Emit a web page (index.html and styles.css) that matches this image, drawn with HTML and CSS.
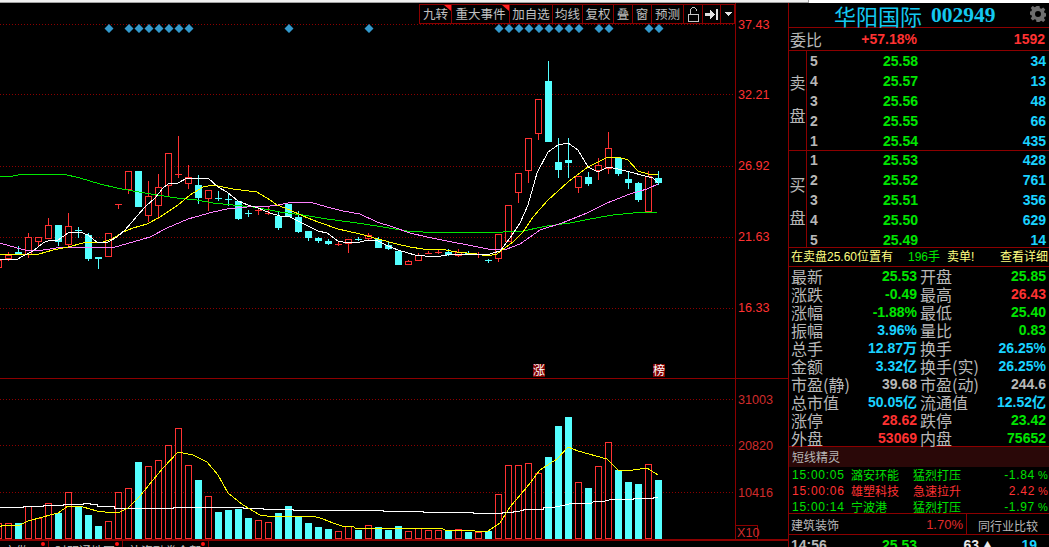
FILE: index.html
```html
<!DOCTYPE html>
<html lang="zh-CN">
<head>
<meta charset="utf-8">
<title>华阳国际 002949</title>
<link rel="stylesheet" href="styles.css">
</head>
<body>
<div class="app">
  <div class="strip"><div class="strip-track"></div></div>
  <div class="main">
    <section class="chart">
      <div class="pane pane-price">
        <svg class="plot" width="788" height="375" viewBox="0 3 788 375">
          <path class="grid" d="M0 24.5H735M0 94.5H735M0 166.5H735M0 237.5H735M0 308.5H735"/>
          <path class="axis" d="M735.5 3V378"/>
          <text class="tick" x="738" y="29">37.43</text>
          <text class="tick" x="738" y="99">32.21</text>
          <text class="tick" x="738" y="170">26.92</text>
          <text class="tick" x="738" y="241">21.63</text>
          <text class="tick" x="738" y="312">16.33</text>
          <path class="diamond" d="M109 24l4.500 4.500-4.500 4.500-4.500-4.500zM129 24l4.500 4.500-4.500 4.500-4.500-4.500zM139 24l4.500 4.500-4.500 4.500-4.500-4.500zM149 24l4.500 4.500-4.500 4.500-4.500-4.500zM159 24l4.500 4.500-4.500 4.500-4.500-4.500zM169 24l4.500 4.500-4.500 4.500-4.500-4.500zM179 24l4.500 4.500-4.500 4.500-4.500-4.500zM189 24l4.500 4.500-4.500 4.500-4.500-4.500zM289 24l4.500 4.500-4.500 4.500-4.500-4.500zM369 24l4.500 4.500-4.500 4.500-4.500-4.500zM499 24l4.500 4.500-4.500 4.500-4.500-4.500zM509 24l4.500 4.500-4.500 4.500-4.500-4.500zM519 24l4.500 4.500-4.500 4.500-4.500-4.500zM529 24l4.500 4.500-4.500 4.500-4.500-4.500zM539 24l4.500 4.500-4.500 4.500-4.500-4.500zM549 24l4.500 4.500-4.500 4.500-4.500-4.500zM559 24l4.500 4.500-4.500 4.500-4.500-4.500zM569 24l4.500 4.500-4.500 4.500-4.500-4.500zM579 24l4.500 4.500-4.500 4.500-4.500-4.500zM599 24l4.500 4.500-4.500 4.500-4.500-4.500zM609 24l4.500 4.500-4.500 4.500-4.500-4.500zM649 24l4.500 4.500-4.500 4.500-4.500-4.500zM659 24l4.500 4.500-4.500 4.500-4.500-4.500z"/>
          <path class="up-body" d="M-4.5 260.5h6v7h-6zM5.5 255.5h6v3h-6zM25.5 237.5h6v17h-6zM35.5 237.5h6v4h-6zM45.5 225.5h6v13h-6zM65.5 226.5h6v18h-6zM105.5 233.5h6v23h-6zM125.5 171.5h6v18h-6zM145.5 196.5h6v19h-6zM155.5 187.5h6v18h-6zM165.5 153.5h6v32h-6zM185.5 177.5h6v6h-6zM205.5 190.5h6v8h-6zM345.5 239.5h6v4h-6zM365.5 235.5h6v3h-6zM405.5 261.5h6v3h-6zM415.5 255.5h6v5h-6zM455.5 252.5h6v3h-6zM495.5 234.5h6v24h-6zM505.5 205.5h6v36h-6zM515.5 173.5h6v19h-6zM525.5 138.5h6v32h-6zM535.5 99.5h6v34h-6zM575.5 176.5h6v11h-6zM595.5 165.5h6v5h-6zM605.5 148.5h6v20h-6zM645.5 176.5h6v35h-6z"/>
          <path class="up-wick" d="M8.5 252V255M8.5 259V261M28.5 233V237M28.5 255V258M38.5 242V247M48.5 218V225M68.5 213V226M68.5 245V247M118.5 204V209M115 204.5h7M128.5 190V194M148.5 181V196M148.5 216V222M158.5 174V187M158.5 206V219M168.5 186V196M178.5 136V178M175 174.5h7M188.5 165V177M188.5 184V189M208.5 199V211M258.5 208V215M255 210.5h7M268.5 207V215M265 213.5h7M338.5 242V246M335 244.5h7M348.5 244V253M368.5 233V235M368.5 239V240M408.5 260V261M418.5 253V255M428.5 251V254M425 253.5h7M438.5 249V254M435 252.5h7M458.5 249V252M458.5 256V257M478.5 252V258M475 254.5h7M498.5 259V262M518.5 193V203M528.5 171V183M538.5 134V140M578.5 188V193M598.5 158V165M598.5 171V180M608.5 132V148M608.5 169V174M648.5 171V176"/>
          <path class="down-wick" d="M18.5 246V252M58.5 242V246M78.5 227V238M75 230.5h7M88.5 233V261M98.5 259V269M198.5 175V204M218.5 191V201M215 198.5h7M228.5 194V206M225 199.5h7M238.5 219V220M248.5 210V217M245 213.5h7M278.5 212V230M298.5 211V233M308.5 238V241M318.5 237V243M328.5 239V245M358.5 237V241M355 239.5h7M378.5 237V239M388.5 242V250M448.5 249V256M468.5 251V255M465 253.5h7M488.5 259V263M485 260.5h7M548.5 61V81M558.5 138V178M568.5 138V178M588.5 172V186M618.5 174V176M628.5 172V189M638.5 182V202M658.5 171V185"/>
          <path class="down-body" d="M15 252h7v3h-7zM55 225h7v17h-7zM85 235h7v24h-7zM95 257h7v2h-7zM135 171h7v36h-7zM195 185h7v13h-7zM235 201h7v18h-7zM275 216h7v12h-7zM285 204h7v13h-7zM295 217h7v15h-7zM305 231h7v7h-7zM315 238h7v3h-7zM325 241h7v3h-7zM375 239h7v9h-7zM385 245h7v4h-7zM395 251h7v14h-7zM445 252h7v3h-7zM545 81h7v61h-7zM555 162h7v8h-7zM565 160h7v3h-7zM585 177h7v7h-7zM615 158h7v16h-7zM625 179h7v4h-7zM635 183h7v17h-7zM655 178h7v5h-7z"/>
          <polyline class="ma-green" points="0,177 13,176 23,174 63,174 80,178 100,184 117,188 133,191 157,195 177,198 197,200 213,203 233,205 253,207 270,210 280,212 303,215 327,219 357,223 383,227 407,231 423,232 473,232 493,232 503,232 523,231 547,226 570,223 590,219 613,215 633,213 657,212"/>
          <polyline class="ma-magenta" points="0,243 17,248 25,250 43,250 63,247 93,247 103,248 115,247 133,242 150,237 167,228 188,219 213,212 227,209 237,208 257,206 270,206 278,205 293,202 310,202 327,207 343,211 360,214 377,222 393,227 410,233 427,237 447,241 473,246 493,250 507,249 520,244 540,230 562,223 587,213 607,203 630,194 647,189 658,184"/>
          <polyline class="ma-yellow" points="0,254 39,254 53,250 68,247 83,243 103,242 112,239 123,232 133,228 147,224 160,217 178,205 190,195 203,187 213,185 233,189 257,192 270,200 277,205 290,210 303,216 318,222 338,229 360,234 378,239 397,244 410,247 423,249 440,249 457,252 477,254 487,256 497,254 513,242 523,232 533,217 548,200 568,182 588,167 608,157 618,157 628,160 638,171 648,174 658,175"/>
          <polyline class="ma-white" points="0,259 18,259 23,256 33,251 43,243 50,240 58,240 68,233 80,232 88,235 98,243 108,242 117,237 125,230 138,215 145,207 155,198 163,188 168,184 178,183 187,178 208,178 218,187 227,192 238,201 248,205 258,208 270,213 280,216 290,217 298,221 310,227 318,231 327,233 338,241 348,243 360,242 368,240 378,241 388,246 398,250 408,253 415,255 425,256 435,257 447,255 457,254 480,254 487,255 493,253 500,251 510,238 520,223 528,205 537,173 548,152 558,145 568,143 578,150 588,167 598,172 608,167 618,169 630,172 645,176 653,178 658,183"/>
          <rect class="flag" x="533" y="364" width="12" height="13"/>
          <text class="flag-text" x="533" y="375">涨</text>
          <rect class="flag" x="653" y="364" width="12" height="13"/>
          <text class="flag-text" x="653" y="375">榜</text>
        </svg>
        <div class="toolbar">
          <span class="tool tool-w32 tool-mark">九转</span>
          <span class="tool tool-w58 tool-mark">重大事件</span>
          <span class="tool tool-w43">加自选</span>
          <span class="tool tool-w30">均线</span>
          <span class="tool tool-w31">复权</span>
          <span class="tool tool-w19">叠</span>
          <span class="tool tool-w19">窗</span>
          <span class="tool tool-w32">预测</span>
          <span class="tool tool-w19">
            <svg class="glyph" width="13" height="15" viewBox="0 0 13 15"><path d="M1.5 7.5h10v7h-10zM3.5 7V3.5a3 3 0 0 1 6 0V4"/></svg>
          </span>
          <span class="tool tool-w18">
            <svg class="glyph-solid" width="13" height="11" viewBox="0 0 13 11"><path d="M0 4h5V1l5 4.5-5 4.500V7H0zM11 0h2v11h-2z"/></svg>
          </span>
          <span class="tool tool-w14">
            <svg class="glyph-solid" width="8" height="4" viewBox="0 0 8 4"><path d="M0 0h8L4 4z"/></svg>
          </span>
        </div>
      </div>
      <div class="pane pane-volume">
        <svg class="plot" width="788" height="160" viewBox="0 379 788 160">
          <path class="grid" d="M0 399.500H735M0 445.500H735M0 492.500H735"/>
          <path class="axis" d="M735.5 379V539"/>
          <text class="tick tick-dim" x="738" y="404">31003</text>
          <text class="tick tick-dim" x="738" y="450">20820</text>
          <text class="tick tick-dim" x="738" y="497">10416</text>
          <rect class="scale-box" x="735.5" y="525.500" width="22" height="14"/>
          <text class="tick tick-dim" x="737" y="537">X10</text>
          <path class="down-body" d="M15 523h7V539h-7zM55 513h7V539h-7zM75 507h7V539h-7zM85 515h7V539h-7zM95 526h7V539h-7zM135 462h7V539h-7zM195 480h7V539h-7zM215 512h7V539h-7zM225 510h7V539h-7zM235 509h7V539h-7zM245 518h7V539h-7zM275 513h7V539h-7zM285 506h7V539h-7zM295 516h7V539h-7zM305 523h7V539h-7zM315 527h7V539h-7zM325 529h7V539h-7zM355 530h7V539h-7zM375 527h7V539h-7zM385 530h7V539h-7zM395 526h7V539h-7zM445 531h7V539h-7zM465 532h7V539h-7zM485 531h7V539h-7zM545 457h7V539h-7zM555 426h7V539h-7zM565 417h7V539h-7zM585 488h7V539h-7zM615 470h7V539h-7zM625 482h7V539h-7zM635 484h7V539h-7zM655 480h7V539h-7z"/>
          <path class="up-body" d="M-4.500 523.500h6V538.500h-6zM5.500 523.500h6V538.500h-6zM25.500 506.500h6V538.500h-6zM35.500 518.500h6V538.500h-6zM45.500 503.500h6V538.500h-6zM65.500 492.500h6V538.500h-6zM105.500 521.500h6V538.500h-6zM115.500 492.500h6V538.500h-6zM125.500 488.500h6V538.500h-6zM145.500 466.500h6V538.500h-6zM155.500 460.500h6V538.500h-6zM165.500 445.500h6V538.500h-6zM175.500 428.500h6V538.500h-6zM185.500 465.500h6V538.500h-6zM205.500 496.500h6V538.500h-6zM255.500 520.500h6V538.500h-6zM265.500 522.500h6V538.500h-6zM335.500 531.500h6V538.500h-6zM345.500 526.500h6V538.500h-6zM365.500 525.500h6V538.500h-6zM405.500 531.500h6V538.500h-6zM415.500 528.500h6V538.500h-6zM425.500 530.500h6V538.500h-6zM435.500 530.500h6V538.500h-6zM455.500 529.500h6V538.500h-6zM475.500 532.500h6V538.500h-6zM495.500 494.500h6V538.500h-6zM505.500 465.500h6V538.500h-6zM515.500 465.500h6V538.500h-6zM525.500 463.500h6V538.500h-6zM535.500 473.500h6V538.500h-6zM575.500 482.500h6V538.500h-6zM595.500 466.500h6V538.500h-6zM605.500 442.500h6V538.500h-6zM645.500 464.500h6V538.500h-6z"/>
          <polyline class="ma-white" points="0,507 23,507 23,506 43,506 43,505 63,505 63,504 83,504 83,503 90,503 90,504 97,504 97,506 114,506 114,508 173,508 173,507 243,507 243,508 263,508 263,509 293,509 293,510 383,510 383,511 423,511 423,512 473,512 473,513 502,513 502,512 513,512 513,511 520,511 527,509 543,509 543,508 555,507 565,505 573,503 592,503 593,502 605,501 613,499 633,499 633,498 653,498 653,497 658,497"/>
          <polyline class="ma-yellow" points="0,527 3,525 20,525 28,521 43,517 50,515 58,513 68,506 83,507 97,511 105,512 120,512 128,508 140,496 153,480 163,468 178,452 183,453 193,455 207,462 218,475 228,493 243,505 260,515 267,516 313,516 323,519 333,523 342,526 354,527 355,528 423,528 443,529 445,530 473,530 475,531 488,531 500,523 510,507 527,487 540,470 557,459 568,447 578,451 607,459 618,470 633,470 647,468 658,475"/>
        </svg>
      </div>
      <div class="tabs">
        <span class="tab tab-a">市做</span>
        <span class="tab tab-b">时明通地图</span>
        <span class="tab tab-c">补资融券全部</span>
      </div>
    </section>

    <aside class="panel">
      <header class="title">
        <h1 class="title-text">华阳国际<b class="title-code">002949</b></h1>
        <svg class="gear" width="16" height="16" viewBox="0 0 16 16"><path d="M6.500 0h3l.4 2.200 1.500.6L13.200 1.500l2.100 2.100-1.300 1.800.6 1.500 2.200.4v3l-2.200.4-.6 1.500 1.300 1.800-2.100 2.100-1.800-1.300-1.500.6L9.500 16h-3l-.4-2.200-1.500-.6-1.800 1.300L.7 12.400 2 10.600l-.6-1.500L-.8 8.700v-3l2.200-.4L2 3.800.7 2 2.800-.1l1.800 1.300 1.500-.6zM8 5a3 3 0 1 0 0 6 3 3 0 0 0 0-6z" fill-rule="evenodd"/></svg>
      </header>
      <div class="ratio">
        <span class="label">委比</span>
        <span class="num red ratio-pct">+57.18%</span>
        <span class="num red ratio-val">1592</span>
      </div>
      <div class="book book-sell">
        <div class="side"><span>卖</span><span>盘</span></div>
        <ul class="levels">
          <li class="level"><span class="lvl">5</span><span class="num green px">25.58</span><span class="num cyan qty">34</span></li>
          <li class="level"><span class="lvl">4</span><span class="num green px">25.57</span><span class="num cyan qty">13</span></li>
          <li class="level"><span class="lvl">3</span><span class="num green px">25.56</span><span class="num cyan qty">48</span></li>
          <li class="level"><span class="lvl">2</span><span class="num green px">25.55</span><span class="num cyan qty">66</span></li>
          <li class="level"><span class="lvl">1</span><span class="num green px">25.54</span><span class="num cyan qty">435</span></li>
        </ul>
      </div>
      <div class="book book-buy">
        <div class="side"><span>买</span><span>盘</span></div>
        <ul class="levels">
          <li class="level"><span class="lvl">1</span><span class="num green px">25.53</span><span class="num cyan qty">428</span></li>
          <li class="level"><span class="lvl">2</span><span class="num green px">25.52</span><span class="num cyan qty">761</span></li>
          <li class="level"><span class="lvl">3</span><span class="num green px">25.51</span><span class="num cyan qty">356</span></li>
          <li class="level"><span class="lvl">4</span><span class="num green px">25.50</span><span class="num cyan qty">629</span></li>
          <li class="level"><span class="lvl">5</span><span class="num green px">25.49</span><span class="num cyan qty">14</span></li>
        </ul>
      </div>
      <div class="notice">
        <span class="notice-a">在卖盘25.60位置有</span>
        <span class="notice-b">196手</span>
        <span class="notice-c">卖单!</span>
        <span class="notice-d">查看详细</span>
      </div>
      <div class="quote">
        <span class="label">最新</span><span class="num green">25.53</span><span class="label">开盘</span><span class="num green">25.85</span>
        <span class="label">涨跌</span><span class="num green">-0.49</span><span class="label">最高</span><span class="num red">26.43</span>
        <span class="label">涨幅</span><span class="num green">-1.88%</span><span class="label">最低</span><span class="num green">25.40</span>
        <span class="label">振幅</span><span class="num cyan">3.96%</span><span class="label">量比</span><span class="num green">0.83</span>
        <span class="label">总手</span><span class="num cyan">12.87万</span><span class="label">换手</span><span class="num cyan">26.25%</span>
        <span class="label">金额</span><span class="num cyan">3.32亿</span><span class="label">换手(实)</span><span class="num cyan">26.25%</span>
        <span class="label">市盈(静)</span><span class="num grey">39.68</span><span class="label">市盈(动)</span><span class="num grey">244.6</span>
        <span class="label">总市值</span><span class="num cyan">50.05亿</span><span class="label">流通值</span><span class="num cyan">12.52亿</span>
        <span class="label">涨停</span><span class="num red">28.62</span><span class="label">跌停</span><span class="num green">23.42</span>
        <span class="label">外盘</span><span class="num red">53069</span><span class="label">内盘</span><span class="num green">75652</span>
      </div>
      <div class="elf-head">短线精灵</div>
      <ul class="elf">
        <li class="elf-row thin-green"><span class="elf-time">15:00:05</span><span class="elf-name">潞安环能</span><span class="elf-sig">猛烈打压</span><span class="elf-val">-1.84</span><span class="elf-pct">%</span></li>
        <li class="elf-row thin-red"><span class="elf-time">15:00:06</span><span class="elf-name">雄塑科技</span><span class="elf-sig">急速拉升</span><span class="elf-val">2.42</span><span class="elf-pct">%</span></li>
        <li class="elf-row thin-green"><span class="elf-time">15:00:14</span><span class="elf-name">宁波港</span><span class="elf-sig">猛烈打压</span><span class="elf-val">-1.97</span><span class="elf-pct">%</span></li>
      </ul>
      <div class="sector">
        <div class="sector-main"><span class="sector-name">建筑装饰</span><span class="sector-pct">1.70%</span></div>
        <div class="sector-link">同行业比较</div>
      </div>
      <div class="tick-row">
        <span class="num grey tr-time">14:56</span>
        <span class="num green tr-px">25.53</span>
        <span class="num white tr-vol">63</span>
        <span class="tr-arrow">▲</span>
        <span class="num cyan tr-n">19</span>
      </div>
    </aside>
  </div>
</div>
</body>
</html>
```

FILE: styles.css
```css
* { box-sizing: border-box; }
html, body { margin: 0; padding: 0; background: #000; overflow: hidden; }
body { font-family: "Noto Sans CJK SC", "Liberation Sans", sans-serif; color: #c0c0c0; }
ul { list-style: none; margin: 0; padding: 0; }
h1 { margin: 0; font-size: inherit; font-weight: normal; }

.app { width: 1049px; height: 547px; display: flex; flex-direction: column; overflow: hidden; }
.strip { height: 3px; flex: none; background: #fff; }
.strip-track { width: 809px; height: 3px; background: #f0f0f0; border-bottom: 1px solid #a0a0a0; border-right: 1px solid #a0a0a0; }
.main { flex: 1; display: flex; min-height: 0; }

/* chart column */
.chart { width: 788px; flex: none; display: flex; flex-direction: column; }
.pane { position: relative; flex: none; }
.pane-price { height: 376px; border-bottom: 1px solid #8c0000; }
.pane-volume { height: 160px; }
.plot { display: block; overflow: hidden; }

.grid { stroke: #8c0000; stroke-width: 1; stroke-dasharray: 1 2; fill: none; }
.axis { stroke: #8c0000; stroke-width: 1; fill: none; }
.tick { font: 12.6px "Liberation Sans", sans-serif; fill: #ff3232; }
.tick-dim { fill: #d02c2c; }
.diamond { fill: #3399cc; }
.up-body { fill: #000; stroke: #ff3232; stroke-width: 1; shape-rendering: crispEdges; }
.up-wick { fill: none; stroke: #ff3232; stroke-width: 1; shape-rendering: crispEdges; }
.down-body { fill: #54ffff; shape-rendering: crispEdges; }
.down-wick { fill: none; stroke: #54ffff; stroke-width: 1; shape-rendering: crispEdges; }
.ma-white, .ma-yellow, .ma-magenta, .ma-green { fill: none; stroke-width: 1; shape-rendering: crispEdges; }
.ma-white { stroke: #fff; }
.ma-yellow { stroke: #ffff00; }
.ma-magenta { stroke: #ff80ff; }
.ma-green { stroke: #00e800; }
.flag { fill: #800000; }
.flag-text { font: 12px "Noto Sans CJK SC", sans-serif; fill: #fff; }
.scale-box { fill: none; stroke: #8c0000; stroke-width: 1; }

/* toolbar floats over the chart */
.toolbar { position: absolute; left: 419px; top: 1px; height: 20px; display: flex; background: #000; border: 1px solid #8c0000; border-right: 0; }
.tool { position: relative; flex: none; height: 18px; display: flex; align-items: center; justify-content: center; border-right: 1px solid #8c0000; font-size: 12.5px; line-height: 18px; color: #c0c0c0; white-space: nowrap; }
.tool-w32 { width: 32px; }
.tool-w58 { width: 58px; }
.tool-w43 { width: 43px; }
.tool-w30 { width: 30px; }
.tool-w31 { width: 31px; }
.tool-w19 { width: 19px; }
.tool-w18 { width: 18px; }
.tool-w14 { width: 14px; }
.tool-mark::after { content: ""; position: absolute; right: 0; top: 0; width: 7px; height: 6px; background: #ff2020; clip-path: polygon(0 0, 100% 0, 100% 100%); }
.glyph { fill: none; stroke: #c8c8c8; stroke-width: 1; shape-rendering: crispEdges; }
.glyph-solid { fill: #e0e0e0; shape-rendering: crispEdges; }

/* bottom tabs */
.tabs { flex: none; height: 8px; display: flex; border-top: 2px solid #8c0000; overflow: hidden; }
.tab { position: relative; flex: none; height: 20px; border-right: 1px solid #8c0000; font-size: 12px; line-height: 14px; padding-top: 3px; color: #c0c0c0; white-space: nowrap; }
.tab::after { content: ""; position: absolute; top: 1px; right: 3px; width: 4px; height: 4px; border-radius: 50%; background: #ff1010; }
.tab-a { width: 49px; padding-left: 4px; }
.tab-b { width: 74px; padding-left: 6px; }
.tab-c { width: 86px; padding-left: 6px; }

/* right panel */
.panel { width: 261px; flex: none; border-left: 1px solid #8c0000; display: flex; flex-direction: column; }
.title { height: 25px; flex: none; display: flex; align-items: center; position: relative; border-bottom: 1px solid #8c0000; color: #14c8f0; }
.title-text { display: flex; align-items: center; margin-left: 45px; font-size: 22px; line-height: 24px; white-space: nowrap; }
.title-code { margin-left: 9px; font: bold 21.500px/24px "Liberation Serif", serif; }
.gear { position: absolute; right: 3px; top: 3px; fill: #6e6e6e; }

.num { font: bold 14px/18px "Liberation Sans", "Noto Sans CJK SC", sans-serif; text-align: right; white-space: nowrap; }
.red { color: #ff3232; }
.green { color: #00e600; }
.cyan { color: #1ad2ff; }
.grey { color: #b8b8b8; }
.white { color: #e8e8e8; }
.label { font-size: 16px; line-height: 18px; color: #b8b8b8; white-space: nowrap; }

.ratio { height: 23px; flex: none; display: flex; align-items: center; padding-left: 1px; border-bottom: 1px solid #8c0000; }
.ratio .label { width: 35px; }
.ratio-pct { width: 92px; }
.ratio-val { width: 128px; }

.book { flex: none; display: flex; border-bottom: 1px solid #8c0000; }
.book-sell { height: 100px; }
.book-buy { height: 97px; }
.side { width: 18px; flex: none; border-right: 1px solid #8c0000; display: flex; flex-direction: column; justify-content: center; align-items: center; font-size: 16px; line-height: 33px; color: #b8b8b8; }
.book-sell .side { padding-bottom: 4px; }
.book-buy .side { padding-top: 3px; }
.levels { flex: 1; overflow: visible; }
.book-buy .levels { margin-top: -1px; }
.level { height: 20px; display: flex; align-items: center; }
.lvl { width: 10px; margin-left: 3px; font: bold 14px/18px "Liberation Sans", sans-serif; color: #b8b8b8; }
.px { width: 98px; }
.qty { width: 128px; }

.notice { height: 19px; flex: none; display: flex; align-items: center; border-bottom: 1px solid #8c0000; font-family: "Liberation Sans", "Noto Sans CJK SC", sans-serif; font-size: 12px; line-height: 18px; color: #ffff80; white-space: nowrap; }
.notice-a { margin-left: 2px; width: 117px; }
.notice-b { width: 39px; color: #00e600; }
.notice-c { width: 53px; }

.quote { flex: none; height: 180px; display: grid; grid-template-columns: 68px 58px 71px 58px; grid-auto-rows: 18px; padding-left: 2px; border-bottom: 1px solid #8c0000; }
.quote > .label:nth-child(4n + 3) { padding-left: 3px; }

.elf-head { height: 20px; flex: none; background: #2a0808; font-size: 12px; line-height: 19px; padding-left: 3px; color: #b8b8b8; }
.elf { height: 47px; flex: none; border-bottom: 1px solid #8c0000; }
.elf-row { height: 16px; display: flex; align-items: center; font-size: 12px; line-height: 16px; white-space: nowrap; }
.thin-green { color: #00e000; }
.thin-red { color: #ff3232; }
.elf-time { width: 59px; margin-left: 3px; font-family: "Liberation Sans", sans-serif; letter-spacing: .75px; }
.elf-name { width: 62px; }
.elf-sig { width: 48px; }
.elf-val { width: 74px; text-align: right; font-family: "Liberation Sans", sans-serif; letter-spacing: .7px; }
.elf-pct { margin-left: 3px; font-family: "Liberation Sans", sans-serif; font-size: 11px; }

.sector { height: 21px; flex: none; display: flex; border-bottom: 1px solid #8c0000; }
.sector-main { width: 178px; flex: none; display: flex; align-items: center; justify-content: space-between; padding: 0 3px 0 2px; border-right: 1px solid #8c0000; }
.sector-name { font-size: 12px; color: #b8b8b8; }
.sector-pct { font: 13px "Liberation Sans", sans-serif; color: #e02c2c; }
.sector-link { flex: 1; text-align: center; font-size: 12px; line-height: 24px; color: #b8b8b8; }

.tick-row { height: 18px; flex: none; display: flex; padding-top: 1px; }
.tr-time { width: 38px; margin-left: 2px; text-align: left; }
.tr-px { width: 88px; }
.tr-vol { width: 62px; }
.tr-arrow { width: 12px; margin-left: 3px; color: #e8e8e8; font-size: 11px; line-height: 18px; }
.tr-n { width: 43px; }
```
